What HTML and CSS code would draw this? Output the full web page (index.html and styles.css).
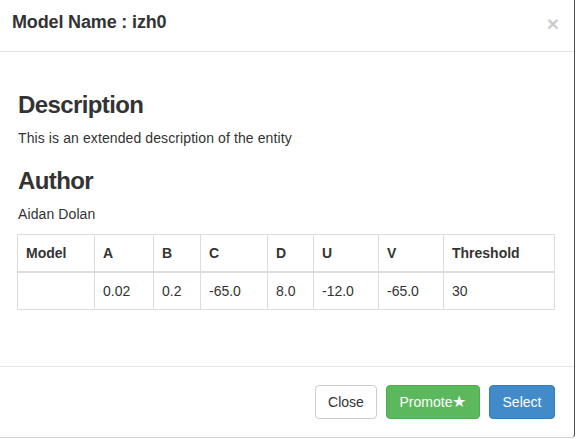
FILE: index.html
```html
<!DOCTYPE html>
<html>
<head>
<meta charset="utf-8">
<link rel="stylesheet" href="styles.css">
</head>
<body>
<div class="modal">
  <div class="modal-header">
    <h4 class="modal-title">Model Name : izh0</h4>
    <button class="close" type="button">×</button>
  </div>
  <div class="modal-body">
    <h3 class="section-title first">Description</h3>
    <p class="section-text">This is an extended description of the entity</p>
    <h3 class="section-title">Author</h3>
    <p class="section-text">Aidan Dolan</p>
    <table class="params">
      <thead>
        <tr>
          <th class="c-model">Model</th>
          <th class="c-a">A</th>
          <th class="c-b">B</th>
          <th class="c-c">C</th>
          <th class="c-d">D</th>
          <th class="c-u">U</th>
          <th class="c-v">V</th>
          <th class="c-t">Threshold</th>
        </tr>
      </thead>
      <tbody>
        <tr>
          <td></td>
          <td>0.02</td>
          <td>0.2</td>
          <td>-65.0</td>
          <td>8.0</td>
          <td>-12.0</td>
          <td>-65.0</td>
          <td>30</td>
        </tr>
      </tbody>
    </table>
  </div>
  <div class="modal-footer">
    <button class="btn btn-default" type="button">Close</button>
    <button class="btn btn-success" type="button">Promote<span class="star">★</span></button>
    <button class="btn btn-primary" type="button">Select</button>
  </div>
</div>
</body>
</html>
```
FILE: styles.css
```css
html, body {
  margin: 0;
  padding: 0;
  background: #ffffff;
}
body {
  font-family: "Liberation Sans", Arial, sans-serif;
  font-size: 14px;
  line-height: 20px;
  color: #333333;
}
.modal {
  width: 574px;
  height: 437px;
  border-right: 1px solid #4d4d4d;
  border-bottom: 1px solid #d0d0d0;
  border-bottom-right-radius: 4px;
  background: #ffffff;
  display: flex;
  flex-direction: column;
}
.modal-header {
  display: flex;
  align-items: flex-start;
  justify-content: space-between;
  height: 26px;
  padding: 9px 15px 16px 12px;
  border-bottom: 1px solid #e5e5e5;
}
.modal-title {
  margin: 0;
  font-size: 18px;
  line-height: 26px;
  font-weight: bold;
  letter-spacing: -0.15px;
  color: #333333;
}
.close {
  margin: 0;
  padding: 0;
  border: 0;
  background: transparent;
  font-family: "Liberation Sans", Arial, sans-serif;
  font-size: 21px;
  font-weight: bold;
  line-height: 26px;
  color: #000000;
  opacity: 0.2;
  position: relative;
  top: 2px;
}
.modal-body {
  padding: 40px 20px 0 17px;
  height: 274px;
}
.section-title {
  margin: 20px 0 0 1px;
  font-size: 24px;
  line-height: 26px;
  font-weight: bold;
  letter-spacing: -0.6px;
  color: #333333;
}
.section-title.first {
  margin-top: 0;
}
.section-text {
  margin: 10px 0 0 1px;
  letter-spacing: 0.1px;
}
.params {
  margin-top: 10px;
  width: 538px;
  border-collapse: collapse;
  table-layout: fixed;
}
.params th,
.params td {
  border: 1px solid #dddddd;
  padding: 8px;
  text-align: left;
  line-height: 20px;
}
.params th {
  font-weight: bold;
  border-bottom: 2px solid #dddddd;
}
.c-model { width: 60px; }
.c-a { width: 42px; }
.c-b { width: 30px; }
.c-c { width: 50px; }
.c-d { width: 29px; }
.c-u { width: 48px; }
.c-v { width: 48px; }
.c-t { width: auto; }
.modal-footer {
  display: flex;
  justify-content: flex-end;
  gap: 9px;
  padding: 18px 19px 0 0;
  border-top: 1px solid #e5e5e5;
}
.btn {
  font-family: "Liberation Sans", Arial, sans-serif;
  font-size: 14px;
  line-height: 20px;
  padding: 6px 12px;
  height: 34px;
  border-radius: 4px;
  border: 1px solid transparent;
  cursor: pointer;
}
.star {
  font-size: 16px;
  line-height: 20px;
}
.btn-default {
  background: #ffffff;
  border-color: #cccccc;
  color: #333333;
  width: 62px;
}
.btn-success {
  background: #5cb85c;
  border-color: #4cae4c;
  color: #ffffff;
  width: 94px;
  padding: 6px 0;
}
.btn-primary {
  background: #428bca;
  border-color: #357ebd;
  color: #ffffff;
  width: 66px;
  padding: 6px 0;
}
```
